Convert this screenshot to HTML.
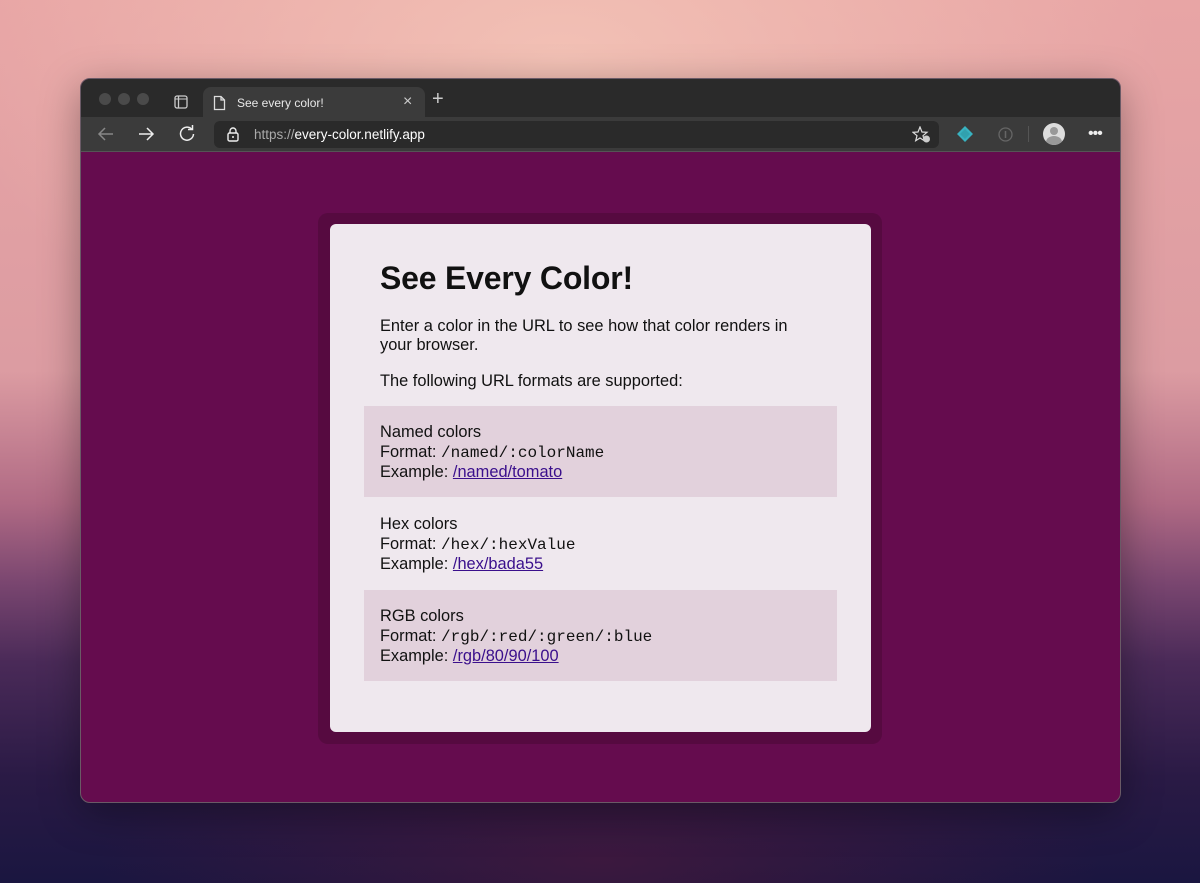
<!DOCTYPE html>
<html><head><meta charset="utf-8"><style>
*{margin:0;padding:0;box-sizing:border-box}
body{width:1200px;height:883px;overflow:hidden;font-family:"Liberation Sans",sans-serif;position:relative;
background:linear-gradient(180deg,#e8a5a5 0%,#dc9ca2 42%,#b06a84 57%,#7a4670 66%,#4a2a58 75%,#2a1a45 88%,#1a1640 100%);}
.bgglow{position:absolute;left:0;top:0;width:1200px;height:883px;background:radial-gradient(ellipse 600px 350px at 560px 60px,rgba(245,200,185,.8),rgba(245,200,185,0) 100%);}
.bgglow2{position:absolute;left:0;top:0;width:1200px;height:883px;background:radial-gradient(ellipse 500px 150px at 600px 860px,rgba(80,25,60,.6),rgba(80,25,60,0) 100%);}
.win{position:absolute;left:80px;top:78px;width:1041px;height:725px;border-radius:10px;overflow:hidden;background:#650c4e;box-shadow:0 10px 40px rgba(0,0,0,.35);border:1px solid #6a5a66}
.tabbar{position:absolute;left:0;top:0;width:100%;height:38px;background:#2a2a2a}
.tool{position:absolute;left:0;top:38px;width:100%;height:35px;background:#3b3b3b;border-bottom:1px solid #555}
.dot{position:absolute;top:14px;width:12px;height:12px;border-radius:50%;background:#4a4a4a}
.tab{position:absolute;left:122px;top:8px;width:222px;height:31px;background:#3b3b3b;border-radius:8px 8px 0 0;color:#e8e8e8;font-size:12px}
.url{position:absolute;left:133px;top:4px;width:725px;height:27px;background:#2a2a2a;border-radius:6px;color:#fff;font-size:13.5px}
.card{position:absolute;left:318px;top:213px;width:564px;height:531px;background:#560a40;border-radius:10px}
.inner{position:absolute;left:330px;top:224px;width:541px;height:508px;background:#efe8ee;border-radius:6px;color:#111;font-size:16.4px}
h1{position:absolute;left:50px;top:36px;font-size:32px;font-weight:bold;letter-spacing:-.2px}
.p{position:absolute;left:50px;line-height:19px}
.blk{position:absolute;left:34px;width:473px;height:91px;padding:17px 16px;line-height:19.5px}
.s{background:#e2d1dc}
code{font-family:"Liberation Mono",monospace;font-size:16px}
a{color:#3a0f8c;text-decoration:underline}
</style></head><body>
<div class="bgglow"></div><div class="bgglow2"></div>
<div class="win">
 <div class="tabbar">
  <div class="dot" style="left:18px"></div><div class="dot" style="left:37px"></div><div class="dot" style="left:56px"></div>
  <svg style="position:absolute;left:93px;top:16px" width="14" height="14"><rect x="1" y="1" width="12" height="12" rx="2" fill="none" stroke="#ccc" stroke-width="1.3"/><line x1="4.5" y1="1" x2="4.5" y2="13" stroke="#ccc" stroke-width="1.3"/><line x1="1" y1="4" x2="13" y2="4" stroke="#ccc"/></svg>
  <div class="tab">
   <svg style="position:absolute;left:10px;top:8px" width="13" height="16"><path d="M1.5 1.5h6.5l3.5 3.5v9.5h-10z M8 1.5v3.5h3.5" fill="none" stroke="#ddd" stroke-width="1.3"/></svg>
   <span style="position:absolute;left:34px;top:9px">See every color!</span>
   <span style="position:absolute;left:200px;top:6px;font-size:16px;color:#ccc">×</span>
  </div>
  <span style="position:absolute;left:351px;top:9px;color:#ccc;font-size:20px;font-weight:300">+</span>
 </div>
 <div class="tool">
  <svg style="position:absolute;left:16px;top:9px" width="18" height="16"><path d="M16 8H3M8 2L2 8l6 6" fill="none" stroke="#888" stroke-width="1.5"/></svg>
  <svg style="position:absolute;left:56px;top:9px" width="18" height="16"><path d="M2 8h13M10 2l6 6-6 6" fill="none" stroke="#eee" stroke-width="1.5"/></svg>
  <svg style="position:absolute;left:97px;top:8px" width="18" height="18"><path d="M14 4.5A6.5 6.5 0 1 0 15.5 9" fill="none" stroke="#eee" stroke-width="1.5"/><path d="M10 4.5h4.5V0" fill="none" stroke="#eee" stroke-width="1.5"/></svg>
  <div class="url">
   <svg style="position:absolute;left:13px;top:6px" width="12" height="15"><path d="M3 6V4a3 3 0 0 1 6 0v2" fill="none" stroke="#eee" stroke-width="1.4"/><rect x="1" y="6" width="10" height="8" rx="1.5" fill="none" stroke="#eee" stroke-width="1.4"/><circle cx="6" cy="10" r="1" fill="#eee"/></svg>
   <span style="position:absolute;left:40px;top:6px"><span style="color:#aaa">https://</span>every-color.netlify.app</span>
   <svg style="position:absolute;left:698px;top:5px" width="20" height="18"><path d="M8 1l2 5 5 .3-4 3.4 1.3 5L8 12l-4.3 2.7L5 9.7 1 6.3 6 6z" fill="none" stroke="#ddd" stroke-width="1.2"/><circle cx="14.5" cy="13" r="3.5" fill="#ccc"/></svg>
  </div>
  <svg style="position:absolute;left:876px;top:9px" width="16" height="16"><path d="M8 0l8 8-8 8-8-8z" fill="#38b2c0"/><path d="M8 3l5 5-5 5-5-5z" fill="#2a8f9c" opacity=".5"/></svg>
  <svg style="position:absolute;left:917px;top:10px" width="15" height="15"><circle cx="7.5" cy="7.5" r="6.5" fill="none" stroke="#666" stroke-width="1.3"/><line x1="7.5" y1="4" x2="7.5" y2="11" stroke="#666" stroke-width="1.5"/></svg>
  <div style="position:absolute;left:947px;top:9px;width:1px;height:16px;background:#555"></div>
  <div style="position:absolute;left:962px;top:6px;width:22px;height:22px;border-radius:50%;background:#ddd;overflow:hidden"><div style="position:absolute;left:7px;top:4px;width:8px;height:8px;border-radius:50%;background:#999"></div><div style="position:absolute;left:3px;top:13px;width:16px;height:12px;border-radius:50%;background:#999"></div></div>
  <span style="position:absolute;left:1007px;top:8px;color:#eee;font-size:16px;letter-spacing:-1px">•••</span>
 </div>
</div>
<div class="card"></div>
<div class="inner">
 <h1>See Every Color!</h1>
 <div class="p" style="top:93px">Enter a color in the URL to see how that color renders in<br>your browser.</div>
 <div class="p" style="top:148px">The following URL formats are supported:</div>
 <div class="blk s" style="top:182px">Named colors<br>Format: <code>/named/:colorName</code><br>Example: <a>/named/tomato</a></div>
 <div class="blk" style="top:274px">Hex colors<br>Format: <code>/hex/:hexValue</code><br>Example: <a>/hex/bada55</a></div>
 <div class="blk s" style="top:366px">RGB colors<br>Format: <code>/rgb/:red/:green/:blue</code><br>Example: <a>/rgb/80/90/100</a></div>
</div>
</body></html>
